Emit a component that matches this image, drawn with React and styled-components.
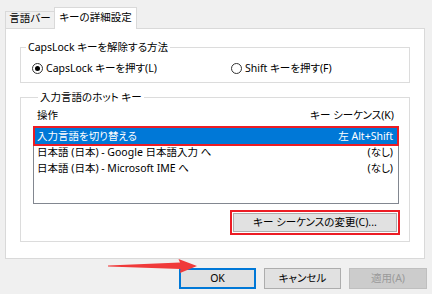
import React from 'react';
import styled, { createGlobalStyle } from 'styled-components';

const GlobalStyle = createGlobalStyle`
  html, body {
    margin: 0;
    padding: 0;
    background: #f0f0f0;
  }
  * {
    box-sizing: border-box;
  }
  body {
    font-family: "Noto Sans", "Noto Sans CJK JP", sans-serif;
    font-size: 10.5px;
    color: #000;
    font-feature-settings: "palt";
  }
`;

const RED = '#ec1c24';

const Window = styled.div`
  position: relative;
  width: 432px;
  height: 294px;
  padding: 7px 0 0 5px;
  overflow: hidden;
`;

const TabStrip = styled.div`
  display: flex;
  align-items: flex-end;
  height: 22px;
  margin-bottom: -1px;
`;

const Tab = styled.div`
  position: relative;
  height: ${(p) => (p.active ? '22px' : '18px')};
  width: ${(p) => (p.active ? '83px' : '50px')};
  margin-left: ${(p) => (p.active ? '-1px' : '0')};
  padding-top: ${(p) => (p.active ? '2px' : '0')};
  z-index: ${(p) => (p.active ? 2 : 0)};
  background: ${(p) => (p.active ? '#fff' : '#f0f0f0')};
  border: 1px solid #d9d9d9;
  border-bottom: none;
  line-height: ${(p) => (p.active ? '14px' : '12px')};
  text-align: center;
  white-space: nowrap;
`;

const Panel = styled.div`
  position: relative;
  width: 420px;
  height: 231px;
  background: #fff;
  border: 1px solid #d9d9d9;
  padding: 11px 14px 0;
`;

const Group = styled.fieldset`
  margin: ${(p) => p.gap || 0}px 0 0;
  padding: ${(p) => p.pad};
  border: 1px solid #dcdcdc;
  min-inline-size: 0;
`;

const Legend = styled.legend`
  margin-left: 5px;
  padding: 0 2px;
  line-height: 14px;
`;

const RadioRow = styled.div`
  display: grid;
  grid-template-columns: 199px 1fr;
  margin-top: 7px;
  padding-left: 11px;
  height: 14px;
`;

const RadioLabel = styled.label`
  display: flex;
  align-items: center;
  gap: 3px;
  line-height: 14px;
  white-space: nowrap;
`;

const RadioDot = styled.span`
  display: flex;
  align-items: center;
  justify-content: center;
  width: 11px;
  height: 11px;
  border: 1px solid #333;
  border-radius: 50%;
  &::after {
    content: '';
    display: ${(p) => (p.checked ? 'block' : 'none')};
    width: 5px;
    height: 5px;
    border-radius: 50%;
    background: #000;
  }
`;

const HeaderRow = styled.div`
  display: flex;
  justify-content: space-between;
  margin-top: 4px;
  padding: 0 5px 0 4px;
  line-height: 14px;
`;

const ListBox = styled.div`
  margin-top: 4px;
  height: 78px;
  border: 1px solid #828790;
  padding: 1px;
`;

const ListRow = styled.div`
  display: flex;
  justify-content: space-between;
  height: 16px;
  line-height: 16px;
  padding: 0 4px 0 2px;
  white-space: nowrap;
  background: ${(p) => (p.selected ? '#0078d7' : 'transparent')};
  color: ${(p) => (p.selected ? '#fff' : '#000')};
  outline: ${(p) => (p.selected ? `2px solid ${RED}` : 'none')};
`;

const ActionRow = styled.div`
  display: flex;
  justify-content: flex-end;
  margin-top: 9px;
  padding-right: 2px;
`;

const Button = styled.button`
  font: inherit;
  font-feature-settings: "palt";
  color: ${(p) => (p.disabled ? '#9a9a9a' : '#000')};
  background: ${(p) => (p.disabled ? '#cccccc' : '#e1e1e1')};
  border: ${(p) => (p.primary ? '2px solid #0078d7' : p.disabled ? '1px solid #bfbfbf' : '1px solid #adadad')};
  width: ${(p) => p.w}px;
  height: ${(p) => p.h}px;
  padding: 0;
  line-height: 1;
  outline: ${(p) => (p.marked ? `2px solid ${RED}` : 'none')};
  outline-offset: 1px;
`;

const Footer = styled.div`
  display: flex;
  justify-content: flex-end;
  gap: 8px;
  margin-top: 9px;
  width: 422px;
`;

const Arrow = styled.svg`
  position: absolute;
  left: 106px;
  top: 257px;
`;

const Radio = ({ checked, children }) => (
  <RadioLabel>
    <RadioDot checked={checked} />
    {children}
  </RadioLabel>
);

const rows = [
  { name: '入力言語を切り替える', key: '左 Alt+Shift', selected: true },
  { name: '日本語 (日本) - Google 日本語入力 へ', key: '(なし)' },
  { name: '日本語 (日本) - Microsoft IME へ', key: '(なし)' },
];

export default function App() {
  return (
    <Window>
      <GlobalStyle />
      <TabStrip>
        <Tab>言語バー</Tab>
        <Tab active>キーの詳細設定</Tab>
      </TabStrip>
      <Panel>
        <Group pad="0 0 7px 0">
          <Legend>CapsLock キーを解除する方法</Legend>
          <RadioRow>
            <Radio checked>CapsLock キーを押す(L)</Radio>
            <Radio>Shift キーを押す(F)</Radio>
          </RadioRow>
        </Group>
        <Group gap={7} pad="0 10px 9px 12px">
          <Legend>入力言語のホット キー</Legend>
          <HeaderRow>
            <span>操作</span>
            <span>キー シーケンス(K)</span>
          </HeaderRow>
          <ListBox>
            {rows.map((r) => (
              <ListRow key={r.name} selected={r.selected}>
                <span>{r.name}</span>
                <span>{r.key}</span>
              </ListRow>
            ))}
          </ListBox>
          <ActionRow>
            <Button w={164} h={19} marked>
              キー シーケンスの変更(C)...
            </Button>
          </ActionRow>
        </Group>
      </Panel>
      <Footer>
        <Button w={77} h={21} primary>OK</Button>
        <Button w={77} h={21}>キャンセル</Button>
        <Button w={78} h={21} disabled>適用(A)</Button>
      </Footer>
      <Arrow width="94" height="18" viewBox="106 257 94 18">
        <polygon
          points="108,265.6 180,262.6 178.5,259 197,266 180,273 180.5,269 108,266.4"
          fill="#f03a3a"
        />
      </Arrow>
    </Window>
  );
}
